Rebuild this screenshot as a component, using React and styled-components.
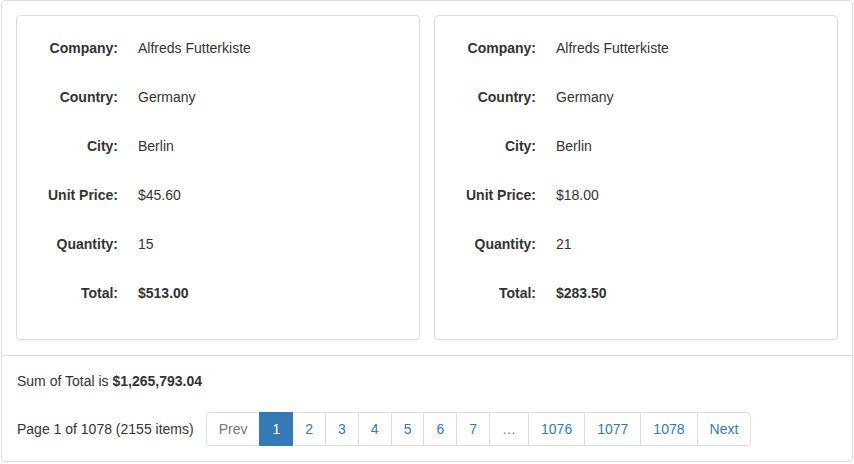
import React from "react";
import styled, { createGlobalStyle } from "styled-components";

const GlobalStyle = createGlobalStyle`
  html, body {
    margin: 0;
    padding: 0;
    background: #fff;
  }
  body {
    font-family: "Liberation Sans", Arial, sans-serif;
    font-size: 14px;
    line-height: 20px;
    color: #333;
  }
`;

const Wrapper = styled.div`
  margin-left: 1px;
  width: 852px;
  box-sizing: border-box;
  border: 1px solid #ddd;
  border-radius: 4px;
`;

const CardsRow = styled.div`
  display: grid;
  grid-template-columns: 1fr 1fr;
  gap: 14px;
  padding: 14px 14px 15px 14px;
  border-bottom: 1px solid #ddd;
`;

const Card = styled.div`
  border: 1px solid #ddd;
  border-radius: 4px;
  box-shadow: 0 1px 1px rgba(0, 0, 0, 0.05);
  padding: 22px 0 36px 0;
  display: grid;
  grid-template-columns: 101px 1fr;
  column-gap: 20px;
  row-gap: 29px;
`;

const Label = styled.div`
  font-weight: bold;
  text-align: right;
`;

const Value = styled.div`
  font-weight: ${(p) => (p.$bold ? "bold" : "normal")};
`;

const Footer = styled.div`
  padding: 15px 15px 15px 15px;
`;

const Sum = styled.div`
  margin-bottom: 21px;
`;

const PagerRow = styled.div`
  display: flex;
  align-items: center;
`;

const PageInfo = styled.span`
  margin-right: 12px;
`;

const Pagination = styled.ul`
  display: flex;
  list-style: none;
  margin: 0;
  padding: 0;
`;

const PageItem = styled.li`
  padding: 6px 12px;
  line-height: 20px;
  border: 1px solid ${(p) => (p.$active ? "#337ab7" : "#ddd")};
  margin-left: -1px;
  position: relative;
  z-index: ${(p) => (p.$active ? 2 : 0)};
  background: ${(p) => (p.$active ? "#337ab7" : "#fff")};
  color: ${(p) => (p.$active ? "#fff" : p.$disabled ? "#777" : "#337ab7")};
  cursor: ${(p) => (p.$disabled ? "default" : "pointer")};

  &:first-child {
    margin-left: 0;
    border-radius: 4px 0 0 4px;
  }
  &:last-child {
    border-radius: 0 4px 4px 0;
  }
`;

const orders = [
  { country: "Germany", city: "Berlin", price: "$45.60", qty: "15", total: "$513.00" },
  { country: "Germany", city: "Berlin", price: "$18.00", qty: "21", total: "$283.50" },
];

const pages = [
  { t: "Prev", disabled: true },
  { t: "1", active: true },
  { t: "2" },
  { t: "3" },
  { t: "4" },
  { t: "5" },
  { t: "6" },
  { t: "7" },
  { t: "…", disabled: true },
  { t: "1076" },
  { t: "1077" },
  { t: "1078" },
  { t: "Next" },
];

function App() {
  return (
    <>
      <GlobalStyle />
      <Wrapper>
        <CardsRow>
          {orders.map((o, i) => (
            <Card key={i}>
              <Label>Company:</Label>
              <Value>Alfreds Futterkiste</Value>
              <Label>Country:</Label>
              <Value>{o.country}</Value>
              <Label>City:</Label>
              <Value>{o.city}</Value>
              <Label>Unit Price:</Label>
              <Value>{o.price}</Value>
              <Label>Quantity:</Label>
              <Value>{o.qty}</Value>
              <Label>Total:</Label>
              <Value $bold>{o.total}</Value>
            </Card>
          ))}
        </CardsRow>
        <Footer>
          <Sum>
            Sum of Total is <b>$1,265,793.04</b>
          </Sum>
          <PagerRow>
            <PageInfo>Page 1 of 1078 (2155 items)</PageInfo>
            <Pagination>
              {pages.map((p) => (
                <PageItem key={p.t} $active={p.active} $disabled={p.disabled}>
                  {p.t}
                </PageItem>
              ))}
            </Pagination>
          </PagerRow>
        </Footer>
      </Wrapper>
    </>
  );
}

export default App;
